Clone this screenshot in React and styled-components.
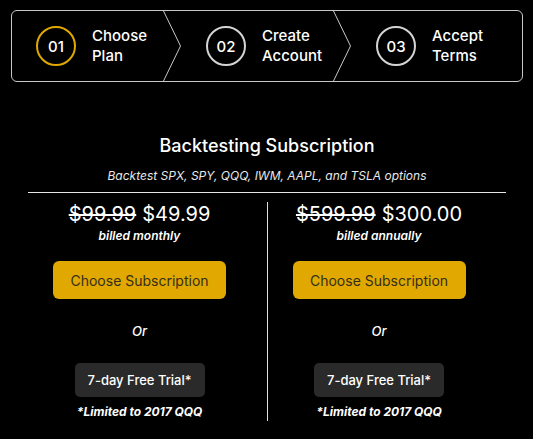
import React from "react";
import styled, { createGlobalStyle } from "styled-components";

const Global = createGlobalStyle`
  html, body { margin: 0; padding: 0; background: #000; }
  body { font-family: Inter, "Noto Sans", sans-serif; color: #fff; }
  * { box-sizing: border-box; }
`;

const Page = styled.div`
  width: 533px;
  height: 439px;
  background: #000;
  padding: 10px 10px 0 11px;
`;

const Stepper = styled.div`
  display: grid;
  grid-template-columns: repeat(3, 1fr);
  width: 512px;
  height: 72px;
  border: 1px solid #c8c8c8;
  border-radius: 6px;
`;

const Step = styled.div`
  position: relative;
  display: flex;
  align-items: center;
  gap: 16px;
  padding-left: 24px;
`;

const Circle = styled.div`
  width: 40px;
  height: 40px;
  flex: none;
  border-radius: 50%;
  border: 2px solid ${(p) => (p.$active ? "#e0a800" : "#d4d4d4")};
  display: flex;
  align-items: center;
  justify-content: center;
  font-size: 15px;
  font-weight: 500;
  color: #fff;
`;

const StepLabel = styled.div`
  font-size: 15px;
  font-weight: 500;
  line-height: 20px;
  color: #fff;
`;

const Chevron = styled.svg`
  position: absolute;
  right: 1px;
  top: 0;
  width: 18px;
  height: 100%;
`;

const Pricing = styled.div`
  width: 478px;
  margin: 52px 0 0 17px;
  display: flex;
  flex-direction: column;
  align-items: center;
`;

const Title = styled.h1`
  margin: 0;
  font-size: 18px;
  font-weight: 500;
  line-height: 24px;
  color: #fff;
`;

const Subtitle = styled.p`
  margin: 9px 0 0;
  font-size: 12px;
  font-style: italic;
  line-height: 18px;
  color: #e8e8e8;
`;

const Rule = styled.hr`
  align-self: stretch;
  margin: 7px 0 0;
  border: 0;
  border-top: 1px solid #e6e6e6;
`;

const Plans = styled.div`
  align-self: stretch;
  display: grid;
  grid-template-columns: 239px 1fr;
  margin-top: 9px;
`;

const Plan = styled.div`
  display: flex;
  flex-direction: column;
  align-items: center;
  padding-right: 16px;
  border-left: ${(p) => (p.$right ? "1px solid #e0e0e0" : "none")};
  padding-bottom: 1px;
`;

const Prices = styled.div`
  display: flex;
  gap: 6px;
  font-size: 20px;
  line-height: 24px;
  color: #fff;
`;

const OldPrice = styled.s`
  text-decoration-thickness: 1.5px;
`;

const Billed = styled.div`
  margin-top: 2px;
  font-size: 12px;
  font-weight: 600;
  font-style: italic;
  line-height: 16px;
`;

const PrimaryButton = styled.button`
  margin-top: 17px;
  width: 173px;
  height: 38px;
  border: 0;
  border-radius: 6px;
  background: #e0a800;
  color: #352e1c;
  font-family: Inter, sans-serif;
  font-size: 14px;
  font-weight: 400;
  cursor: pointer;
`;

const Or = styled.div`
  margin-top: 23px;
  font-size: 13px;
  font-weight: 500;
  font-style: italic;
  line-height: 18px;
`;

const TrialButton = styled.button`
  margin-top: 23px;
  width: 130px;
  height: 34px;
  border: 0;
  border-radius: 5px;
  background: #2a2a2a;
  color: #fff;
  font-family: Inter, sans-serif;
  font-size: 13px;
  font-weight: 500;
  cursor: pointer;
`;

const Note = styled.div`
  margin-top: 7px;
  font-size: 12px;
  font-weight: 700;
  font-style: italic;
  line-height: 16px;
`;

const steps = [
  { n: "01", a: "Choose", b: "Plan", active: true },
  { n: "02", a: "Create", b: "Account" },
  { n: "03", a: "Accept", b: "Terms" },
];

const plans = [
  { old: "$99.99", now: "$49.99", billed: "billed monthly" },
  { old: "$599.99", now: "$300.00", billed: "billed annually", right: true },
];

export default function App() {
  return (
    <>
      <Global />
      <Page>
        <Stepper>
          {steps.map((s, i) => (
            <Step key={s.n}>
              <Circle $active={s.active}>{s.n}</Circle>
              <StepLabel>
                {s.a}
                <br />
                {s.b}
              </StepLabel>
              {i < 2 && (
                <Chevron viewBox="0 0 18 70" preserveAspectRatio="none">
                  <path d="M0.5 0 L17.5 35 L0.5 70" fill="none" stroke="#c8c8c8" strokeWidth="1" />
                </Chevron>
              )}
            </Step>
          ))}
        </Stepper>
        <Pricing>
          <Title>Backtesting Subscription</Title>
          <Subtitle>Backtest SPX, SPY, QQQ, IWM, AAPL, and TSLA options</Subtitle>
          <Rule />
          <Plans>
            {plans.map((p) => (
              <Plan key={p.now} $right={p.right}>
                <Prices>
                  <OldPrice>{p.old}</OldPrice>
                  <span>{p.now}</span>
                </Prices>
                <Billed>{p.billed}</Billed>
                <PrimaryButton>Choose Subscription</PrimaryButton>
                <Or>Or</Or>
                <TrialButton>7-day Free Trial*</TrialButton>
                <Note>*Limited to 2017 QQQ</Note>
              </Plan>
            ))}
          </Plans>
        </Pricing>
      </Page>
    </>
  );
}
